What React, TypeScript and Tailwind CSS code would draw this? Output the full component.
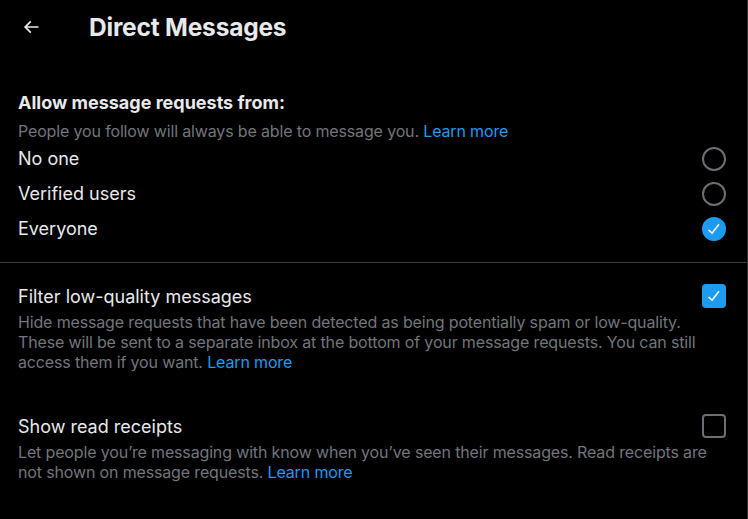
import type { ReactNode } from 'react'

const font = { fontFamily: 'Inter, "Open Sans", sans-serif' }

function BackArrow() {
  return (
    <svg viewBox="0 0 24 24" className="h-5 w-5 fill-[#e7e9ea]">
      <path d="M7.414 13l5.043 5.04-1.414 1.42L3.586 12l7.457-7.46 1.414 1.42L7.414 11H21v2H7.414z" />
    </svg>
  )
}

function Check() {
  return (
    <svg viewBox="0 0 24 24" className="h-[18px] w-[18px] fill-white">
      <path d="M9.64 18.952l-5.55-4.861 1.317-1.504 3.951 3.459 8.459-10.948L19.4 6.32 9.64 18.952z" />
    </svg>
  )
}

function Radio({ checked }: { checked?: boolean }) {
  if (checked) {
    return (
      <span className="flex h-6 w-6 items-center justify-center rounded-full bg-[#1d9bf0]">
        <Check />
      </span>
    )
  }
  return <span className="h-6 w-6 rounded-full border-2 border-[#6b6f73]" />
}

function Checkbox({ checked }: { checked?: boolean }) {
  if (checked) {
    return (
      <span className="flex h-6 w-6 items-center justify-center rounded-[4px] bg-[#1d9bf0]">
        <Check />
      </span>
    )
  }
  return <span className="h-6 w-6 rounded-[4px] border-2 border-[#6b6f73]" />
}

function LearnMore() {
  return <span className="text-[#1d9bf0]">Learn more</span>
}

function Option({ label, checked }: { label: string; checked?: boolean }) {
  return (
    <div className="flex h-[35px] items-center justify-between">
      <span className="text-[18px] text-[#e7e9ea]">{label}</span>
      <Radio checked={checked} />
    </div>
  )
}

function Setting({ title, checked, children }: { title: string; checked?: boolean; children: ReactNode }) {
  return (
    <div>
      <div className="flex h-6 items-center justify-between">
        <span className="text-[18px] text-[#e7e9ea]">{title}</span>
        <Checkbox checked={checked} />
      </div>
      <p className="mt-[4px] text-[16px] leading-5 tracking-[-0.15px] text-[#71767b]">{children}</p>
    </div>
  )
}

export default function App() {
  return (
    <div className="h-[519px] w-[748px] border-r border-[#2f3336] bg-black" style={font}>
      <header className="flex h-[54px] items-center">
        <span className="flex w-[89px] justify-start pl-[21px]">
          <BackArrow />
        </span>
        <h1 className="text-[24.5px] font-bold tracking-[-0.2px] text-[#e7e9ea]">Direct Messages</h1>
      </header>

      <section className="pt-[37px] pr-[21px] pb-[17px] pl-[18px]">
        <h2 className="text-[18px] leading-6 font-bold text-[#e7e9ea]">Allow message requests from:</h2>
        <p className="mt-[6px] text-[16px] leading-5 tracking-[-0.15px] text-[#71767b]">
          People you follow will always be able to message you. <LearnMore />
        </p>
        <div className="-mb-[1px]">
          <Option label="No one" />
          <Option label="Verified users" />
          <Option label="Everyone" checked />
        </div>
      </section>

      <div className="h-px bg-[#3a3d41]" />

      <section className="pt-[21px] pr-[21px] pl-[18px]">
        <Setting title="Filter low-quality messages" checked>
          Hide message requests that have been detected as being potentially spam or low-quality. These will be sent
          to a separate inbox at the bottom of your message requests. You can still access them if you want.{' '}
          <LearnMore />
        </Setting>
        <div className="mt-[42px]">
          <Setting title="Show read receipts">
            Let people you’re messaging with know when you’ve seen their messages. Read receipts are not shown on
            message requests. <LearnMore />
          </Setting>
        </div>
      </section>
    </div>
  )
}
